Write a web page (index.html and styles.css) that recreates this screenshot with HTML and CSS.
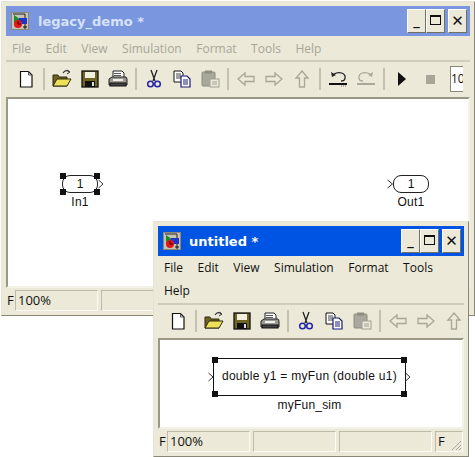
FILE: index.html
```html
<!DOCTYPE html>
<html lang="en">
<head>
    <meta charset="UTF-8">
    <title>legacy_demo</title>
    <link rel="stylesheet" href="styles.css">
</head>
<body>
    <svg class="defs" width="0" height="0">
        <symbol id="app" viewBox="0 0 18 18">
            <rect x="0.5" y="0.5" width="17" height="17" fill="#c8c4b4" stroke="#8a8778"/>
            <path d="M2 2h12v11" fill="none" stroke="#222" stroke-width="1"/>
            <path d="M3 3l7 5-7 3z" fill="#1c8a2e"/>
            <rect x="8" y="6" width="8" height="6" fill="#2233cc"/>
            <circle cx="7" cy="12" r="4" fill="#e01818"/>
            <path d="M7 9v3h3" fill="none" stroke="#400" stroke-width="1"/>
            <path d="M14 13v4M12 15h4" stroke="#111" stroke-width="1"/>
        </symbol>
        <symbol id="new" viewBox="0 0 20 20">
            <path d="M4.5 2.5h8l3.5 3.500v12h-11.500z" fill="#fff" stroke="#111" stroke-width="1.200"/>
            <path d="M12.500 2.500v3.500h3.500" fill="none" stroke="#555"/>
        </symbol>
        <symbol id="open" viewBox="0 0 20 20">
            <path d="M1 6h5l1 2h8v9h-14z" fill="#6e6420" stroke="#2c2a10"/>
            <path d="M1 17l4-7h14l-4 7z" fill="#efe05a" stroke="#2c2a10"/>
            <path d="M11 4c2-3 5-3 6-1" fill="none" stroke="#333" stroke-width="1.200"/>
            <path d="M15 1l3 2-3 2" fill="none" stroke="#333"/>
        </symbol>
        <symbol id="save" viewBox="0 0 20 20">
            <rect x="2" y="2" width="16" height="16" fill="#6e6622" stroke="#111" stroke-width="1.300"/>
            <rect x="5" y="3" width="10" height="6" fill="#f2efe0"/>
            <rect x="5" y="12" width="10" height="6" fill="#111"/>
            <rect x="12" y="13" width="2" height="4" fill="#ddd"/>
        </symbol>
        <symbol id="print" viewBox="0 0 20 20">
            <path d="M5 2h9l2 2v5h-11z" fill="#fff" stroke="#222"/>
            <path d="M6 4.500h7M6 6.500h7" stroke="#555"/>
            <path d="M1 10l3-2h14l1 2v6h-18z" fill="#9c9a90" stroke="#222"/>
            <rect x="2" y="14" width="16" height="3" fill="#444" stroke="#111"/>
            <rect x="5" y="10" width="10" height="2" fill="#eee"/>
        </symbol>
        <symbol id="cut" viewBox="0 0 20 20">
            <path d="M7 1l4 11M13 1l-4 11" stroke="#222" stroke-width="1.300" fill="none"/>
            <circle cx="6.500" cy="15" r="2.800" fill="none" stroke="#2323a8" stroke-width="1.500"/>
            <circle cx="13.500" cy="15" r="2.800" fill="none" stroke="#2323a8" stroke-width="1.500"/>
        </symbol>
        <symbol id="copy" viewBox="0 0 20 20">
            <path d="M2 2h7l2 2v9h-9z" fill="#fff" stroke="#111"/>
            <path d="M4 5h5M4 7h5M4 9h5" stroke="#444"/>
            <path d="M9 7h6l3 3v8h-9z" fill="#fff" stroke="#1a1a80" stroke-width="1.200"/>
            <path d="M11 11h5M11 13h5M11 15h5" stroke="#1a1a80"/>
        </symbol>
        <symbol id="paste" viewBox="0 0 20 20">
            <rect x="2" y="3" width="13" height="14" rx="1" fill="#a8a89c" stroke="#8c8c80"/>
            <rect x="5" y="1.500" width="7" height="3" fill="#8c8c80"/>
            <rect x="10" y="10" width="9" height="8" fill="#ece9d8" stroke="#a0a094"/>
            <path d="M12 13h5M12 15h5" stroke="#a0a094"/>
        </symbol>
        <symbol id="back" viewBox="0 0 20 20">
            <path d="M9 4l-7 6 7 6v-3.500h9v-5h-9z" fill="#ece9d8" stroke="#a8a698" stroke-width="1.300"/>
        </symbol>
        <symbol id="fwd" viewBox="0 0 20 20">
            <path d="M11 4l7 6-7 6v-3.500h-9v-5h9z" fill="#ece9d8" stroke="#a8a698" stroke-width="1.300"/>
        </symbol>
        <symbol id="up" viewBox="0 0 20 20">
            <path d="M10 2l6 7h-3.500v9h-5v-9h-3.500z" fill="#ece9d8" stroke="#a8a698" stroke-width="1.300"/>
        </symbol>
        <symbol id="undo" viewBox="0 0 20 20">
            <path d="M6 5c5-3 12-1 11 4 0 2-2 3-4 3" fill="none" stroke="#222" stroke-width="1.300"/>
            <path d="M3 3l1 5 4-2z" fill="#222"/>
            <rect x="1" y="14" width="18" height="2" fill="#111"/>
            <path d="M13 17h6" stroke="#777" stroke-dasharray="1 1"/>
        </symbol>
        <symbol id="redo" viewBox="0 0 20 20">
            <path d="M14 5c-5-3-12-1-11 4 0 2 2 3 4 3" fill="none" stroke="#aaa89a" stroke-width="1.300"/>
            <path d="M17 3l-1 5-4-2z" fill="#aaa89a"/>
            <rect x="1" y="14" width="18" height="2" fill="#aaa89a"/>
        </symbol>
        <symbol id="play" viewBox="0 0 20 20"><path d="M6 3l8 7-8 7z" fill="#111"/></symbol>
        <symbol id="stop" viewBox="0 0 20 20"><rect x="6" y="6" width="9" height="9" fill="#a8a698"/></symbol>
    </svg>

    <div class="window window-back">
        <div class="titlebar">
            <svg class="app-icon"><use href="#app"/></svg>
            <span class="title">legacy_demo *</span>
            <div class="caption-btns">
                <button class="cap">_</button><button class="cap cap-max"></button><button class="cap cap-close">✕</button>
            </div>
        </div>
        <div class="menubar menubar-off">
            <span>File</span><span>Edit</span><span>View</span><span>Simulation</span><span>Format</span><span>Tools</span><span>Help</span>
        </div>
        <div class="toolbar">
            <svg class="tool"><use href="#new"/></svg><i class="sep"></i>
            <svg class="tool"><use href="#open"/></svg><svg class="tool"><use href="#save"/></svg><svg class="tool"><use href="#print"/></svg><i class="sep"></i>
            <svg class="tool"><use href="#cut"/></svg><svg class="tool"><use href="#copy"/></svg><svg class="tool"><use href="#paste"/></svg><i class="sep"></i>
            <svg class="tool"><use href="#back"/></svg><svg class="tool"><use href="#fwd"/></svg><svg class="tool"><use href="#up"/></svg><i class="sep"></i>
            <svg class="tool"><use href="#undo"/></svg><svg class="tool"><use href="#redo"/></svg><i class="sep"></i>
            <svg class="tool"><use href="#play"/></svg><svg class="tool"><use href="#stop"/></svg>
            <span class="sim-time">10</span>
        </div>
        <div class="canvas canvas-back">
            <div class="port port-in">
                <div class="pill">1</div>
                <b class="h tl"></b><b class="h tr"></b><b class="h bl"></b><b class="h br"></b>
                <svg class="chev chev-out" width="6" height="10"><path d="M0.500 1l4.500 4-4.500 4" fill="none" stroke="#333"/></svg>
                <div class="name">In1</div>
            </div>
            <div class="port port-out">
                <div class="pill">1</div>
                <svg class="chev chev-in" width="7" height="10"><path d="M0.500 1l5 4-5 4" fill="none" stroke="#333"/></svg>
                <div class="name">Out1</div>
            </div>
        </div>
        <div class="statusbar">
            <span class="clip">F</span>
            <span class="field field-zoom">100%</span>
            <span class="field field-wide"></span>
            <span class="field field-wide"></span>
        </div>
    </div>

    <div class="window window-front">
        <div class="titlebar">
            <svg class="app-icon"><use href="#app"/></svg>
            <span class="title">untitled *</span>
            <div class="caption-btns">
                <button class="cap">_</button><button class="cap cap-max"></button><button class="cap cap-close">✕</button>
            </div>
        </div>
        <div class="menubar">
            <span>File</span><span>Edit</span><span>View</span><span>Simulation</span><span>Format</span><span>Tools</span><span>Help</span>
        </div>
        <div class="toolbar">
            <svg class="tool"><use href="#new"/></svg><i class="sep"></i>
            <svg class="tool"><use href="#open"/></svg><svg class="tool"><use href="#save"/></svg><svg class="tool"><use href="#print"/></svg><i class="sep"></i>
            <svg class="tool"><use href="#cut"/></svg><svg class="tool"><use href="#copy"/></svg><svg class="tool"><use href="#paste"/></svg><i class="sep"></i>
            <svg class="tool"><use href="#back"/></svg><svg class="tool"><use href="#fwd"/></svg><svg class="tool"><use href="#up"/></svg>
        </div>
        <div class="canvas canvas-front">
            <div class="sfun">
                double y1 = myFun (double u1)
                <b class="h tl"></b><b class="h tr"></b><b class="h bl"></b><b class="h br"></b>
                <svg class="chev sfun-in" width="6" height="10"><path d="M0.500 1l4.500 4-4.500 4" fill="none" stroke="#333"/></svg>
                <svg class="chev sfun-out" width="6" height="10"><path d="M0.500 1l4.500 4-4.500 4" fill="none" stroke="#333"/></svg>
                <div class="name">myFun_sim</div>
            </div>
        </div>
        <div class="statusbar">
            <span class="clip">F</span>
            <span class="field field-zoom">100%</span>
            <span class="field field-mid"></span>
            <span class="field field-last"></span>
            <span class="field field-grip">F
                <svg class="grip" width="13" height="13"><path d="M12 3l-9 9M12 7l-5 5M12 10l-2 2" stroke="#a8a698" fill="none"/></svg>
            </span>
        </div>
    </div>
</body>
</html>
```

FILE: styles.css
```css
html, body { margin: 0; padding: 0; }
body { width: 475px; height: 457px; background: #fff; position: relative; overflow: hidden; font-family: "Open Sans", "Liberation Sans", sans-serif; color: #111; }
.defs { position: absolute; }

.window { position: absolute; box-sizing: border-box; background: #ece9d8; border: 1px solid #e6e3d2; border-right-color: #8a8778; border-bottom-color: #8a8778; padding: 4px; display: flex; flex-direction: column; overflow: hidden; }
.window-back { left: 1px; top: 1px; width: 474px; height: 315px; }
.window-front { left: 153px; top: 221px; width: 316px; height: 236px; }

.titlebar { flex: none; height: 30px; display: flex; align-items: center; padding: 0 3px 0 5px; background: #7a96df; color: #d6e2f8; }
.window-front .titlebar { background: #0054e3; color: #fff; }
.app-icon { width: 18px; height: 18px; flex: none; }
.title { margin-left: 9px; font-family: "DejaVu Sans", sans-serif; font-size: 13px; font-weight: bold; }
.window-front .title { margin-left: 8px; }
.caption-btns { margin-left: auto; display: flex; }
.cap { width: 19px; height: 24px; padding: 0; border: 1px solid #fff; border-right-color: #716f64; border-bottom-color: #716f64; background: #ece9d8; font-family: "DejaVu Sans", sans-serif; font-size: 13px; font-weight: bold; color: #111; line-height: 20px; }
.cap-max { position: relative; }
.cap-max::before { content: ""; position: absolute; left: 3px; top: 5px; width: 9px; height: 7px; border: 1px solid #111; border-top-width: 2px; }
.cap-close { margin-left: 3px; font-size: 15px; font-weight: 900; }

.menubar { flex: none; display: flex; flex-wrap: wrap; font-size: 12px; line-height: 23px; padding: 1px 0 0 6px; border-bottom: 2px solid #d0cdbc; column-gap: 14.500px; }
.menubar-off { color: #a8a698; height: 23px; }
.window-front .menubar { line-height: 22.500px; width: 290px; padding-bottom: 1px; border-bottom: 0; }
.window-front .toolbar { border-top: 2px solid #d0cdbc; }

.toolbar { flex: none; height: 35px; box-sizing: border-box; display: flex; align-items: center; padding-left: 6px; padding-bottom: 1px; overflow: hidden; }
.tool { width: 28px; height: 20px; flex: none; }
.sep { flex: none; width: 2px; height: 22px; margin: 0 3px; background: #c4c1b0; }
.sim-time { flex: none; margin-left: 6px; width: 13px; height: 26px; overflow: hidden; box-sizing: border-box; background: #fff; border: 1px solid #8a8778; border-right: 0; font-size: 12px; line-height: 24px; }

.canvas { flex: 1; position: relative; background: #fff; border: 2px solid #9a9786; border-right-color: #f4f2e6; border-bottom-color: #f4f2e6; margin-bottom: 1px; }

.port { position: absolute; width: 36px; height: 18px; }
.port-in { left: 54px; top: 76px; }
.port-out { left: 385px; top: 76px; }
.pill { box-sizing: border-box; height: 18px; border: 1px solid #222; border-radius: 8px; text-align: center; font-family: "Liberation Sans", sans-serif; font-size: 12px; line-height: 16px; }
.name { position: absolute; top: 100%; left: 50%; transform: translateX(-50%); margin-top: 2px; font-family: "Liberation Sans", sans-serif; font-size: 12px; letter-spacing: 0.200px; line-height: 14px; white-space: nowrap; }
.h { position: absolute; width: 6px; height: 6px; background: #111; }
.tl { left: -2px; top: -2px; }
.tr { right: -2px; top: -2px; }
.bl { left: -2px; bottom: -2px; }
.br { right: -2px; bottom: -2px; }
.chev { position: absolute; }
.chev-out { right: -6px; top: 4px; }
.chev-in { left: -6px; top: 4px; }

.sfun { position: absolute; left: 53px; top: 18px; width: 193px; height: 38px; box-sizing: border-box; border: 1px solid #111; text-align: center; font-family: "Liberation Sans", sans-serif; font-size: 12px; letter-spacing: 0.300px; line-height: 35px; white-space: nowrap; }
.sfun .name { margin-top: 3px; }
.sfun-in { left: -6px; top: 13px; }
.sfun-out { right: -6px; top: 13px; }

.statusbar { flex: none; height: 22px; display: flex; align-items: stretch; padding-top: 1px; font-size: 13px; box-sizing: border-box; }
.clip { width: 8px; padding-left: 1px; overflow: hidden; flex: none; line-height: 21px; }
.field { flex: none; box-sizing: border-box; border: 1px solid #bdbaa9; border-right-color: #fbfaf4; border-bottom-color: #fbfaf4; margin-right: 3px; line-height: 18px; padding-left: 2px; position: relative; }
.field-zoom { width: 83px; }
.field-wide { width: 180px; }
.field-mid { width: 83px; }
.field-last { width: 93px; }
.field-grip { width: 28px; margin: 0; }
.grip { position: absolute; right: 0; bottom: 0; }
```
